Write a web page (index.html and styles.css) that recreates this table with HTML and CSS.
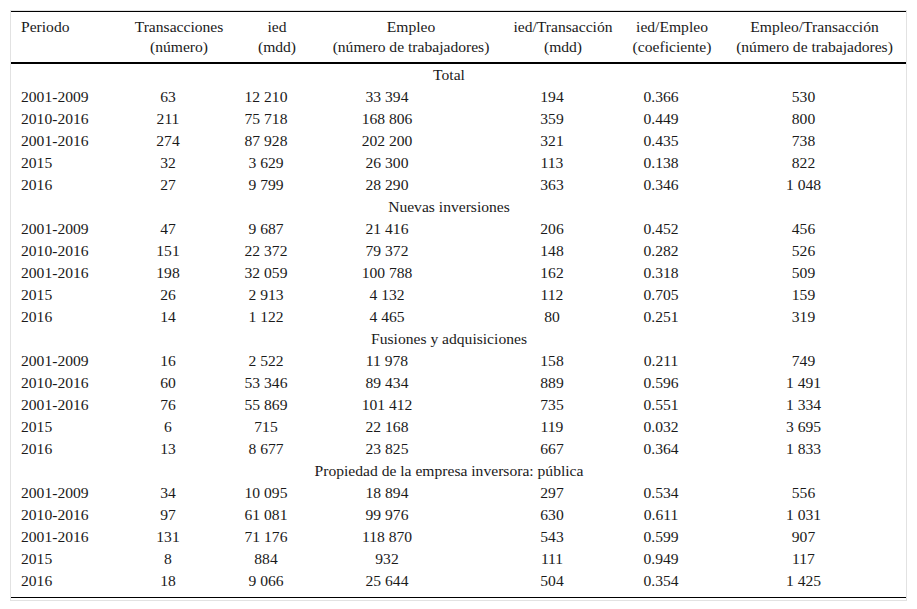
FILE: index.html
```html
<!DOCTYPE html>
<html lang="es">
<head>
<meta charset="utf-8">
<title>Tabla</title>
<link rel="stylesheet" href="styles.css">
</head>
<body>
<div class="wrap">
<table class="tbl">
<colgroup>
<col class="c1"><col class="c2"><col class="c3"><col class="c4"><col class="c5"><col class="c6"><col class="c7">
</colgroup>
<thead>
<tr>
<th class="left">Periodo</th>
<th>Transacciones<br>(número)</th>
<th>ied<br>(mdd)</th>
<th>Empleo<br>(número de trabajadores)</th>
<th>ied/Transacción<br>(mdd)</th>
<th>ied/Empleo<br>(coeficiente)</th>
<th>Empleo/Transacción<br>(número de trabajadores)</th>
</tr>
</thead>
<tbody>
<tr class="sec"><td colspan="7">Total</td></tr>
<tr><td>2001-2009</td><td>63</td><td>12 210</td><td class="wide">33 394</td><td>194</td><td>0.366</td><td>530</td></tr>
<tr><td>2010-2016</td><td>211</td><td>75 718</td><td class="wide">168 806</td><td>359</td><td>0.449</td><td>800</td></tr>
<tr><td>2001-2016</td><td>274</td><td>87 928</td><td class="wide">202 200</td><td>321</td><td>0.435</td><td>738</td></tr>
<tr><td>2015</td><td>32</td><td>3 629</td><td class="wide">26 300</td><td>113</td><td>0.138</td><td>822</td></tr>
<tr><td>2016</td><td>27</td><td>9 799</td><td class="wide">28 290</td><td>363</td><td>0.346</td><td>1 048</td></tr>
<tr class="sec"><td colspan="7">Nuevas inversiones</td></tr>
<tr><td>2001-2009</td><td>47</td><td>9 687</td><td class="wide">21 416</td><td>206</td><td>0.452</td><td>456</td></tr>
<tr><td>2010-2016</td><td>151</td><td>22 372</td><td class="wide">79 372</td><td>148</td><td>0.282</td><td>526</td></tr>
<tr><td>2001-2016</td><td>198</td><td>32 059</td><td class="wide">100 788</td><td>162</td><td>0.318</td><td>509</td></tr>
<tr><td>2015</td><td>26</td><td>2 913</td><td class="wide">4 132</td><td>112</td><td>0.705</td><td>159</td></tr>
<tr><td>2016</td><td>14</td><td>1 122</td><td class="wide">4 465</td><td>80</td><td>0.251</td><td>319</td></tr>
<tr class="sec"><td colspan="7">Fusiones y adquisiciones</td></tr>
<tr><td>2001-2009</td><td>16</td><td>2 522</td><td class="wide">11 978</td><td>158</td><td>0.211</td><td>749</td></tr>
<tr><td>2010-2016</td><td>60</td><td>53 346</td><td class="wide">89 434</td><td>889</td><td>0.596</td><td>1 491</td></tr>
<tr><td>2001-2016</td><td>76</td><td>55 869</td><td class="wide">101 412</td><td>735</td><td>0.551</td><td>1 334</td></tr>
<tr><td>2015</td><td>6</td><td>715</td><td class="wide">22 168</td><td>119</td><td>0.032</td><td>3 695</td></tr>
<tr><td>2016</td><td>13</td><td>8 677</td><td class="wide">23 825</td><td>667</td><td>0.364</td><td>1 833</td></tr>
<tr class="sec"><td colspan="7">Propiedad de la empresa inversora: pública</td></tr>
<tr><td>2001-2009</td><td>34</td><td>10 095</td><td class="wide">18 894</td><td>297</td><td>0.534</td><td>556</td></tr>
<tr><td>2010-2016</td><td>97</td><td>61 081</td><td class="wide">99 976</td><td>630</td><td>0.611</td><td>1 031</td></tr>
<tr><td>2001-2016</td><td>131</td><td>71 176</td><td class="wide">118 870</td><td>543</td><td>0.599</td><td>907</td></tr>
<tr><td>2015</td><td>8</td><td>884</td><td class="wide">932</td><td>111</td><td>0.949</td><td>117</td></tr>
<tr class="last"><td>2016</td><td>18</td><td>9 066</td><td class="wide">25 644</td><td>504</td><td>0.354</td><td>1 425</td></tr>
</tbody>
</table>
</div>
</body>
</html>
```
FILE: styles.css
```css
html, body {
  margin: 0;
  padding: 0;
  background: #ffffff;
}
body {
  padding: 10px;
  font-family: "Liberation Serif", "Times New Roman", serif;
  font-size: 15.6px;
  color: #1a1a1a;
}
.wrap {
  width: 895px;
  border: 1px solid #e2e2e2;
  padding-bottom: 2px;
}
.tbl {
  width: 895px;
  table-layout: fixed;
  border-collapse: collapse;
  border-top: 1px solid #000;
  border-bottom: 1px solid #000;
}
.c1 { width: 110px; }
.c2 { width: 116px; }
.c3 { width: 80px; }
.c4 { width: 188px; }
.c5 { width: 116px; }
.c6 { width: 102px; }
.c7 { width: 183px; }
.tbl th {
  font-weight: normal;
  text-align: center;
  vertical-align: top;
  line-height: 20px;
  padding: 5px 0 5px 0;
  white-space: nowrap;
  border-bottom: 2px solid #000;
}
.tbl th.left {
  text-align: left;
  padding-left: 10px;
}
.tbl td {
  text-align: center;
  vertical-align: top;
  line-height: 22px;
  padding: 0 22px 0 0;
  white-space: nowrap;
}
.tbl td:first-child {
  text-align: left;
  padding: 0 0 0 10px;
}
.tbl td.wide {
  padding-right: 48px;
}
.tbl tr.sec td {
  text-align: center;
  padding: 0 19px 0 0;
}
.tbl tr.last td {
  padding-bottom: 5px;
}
```
